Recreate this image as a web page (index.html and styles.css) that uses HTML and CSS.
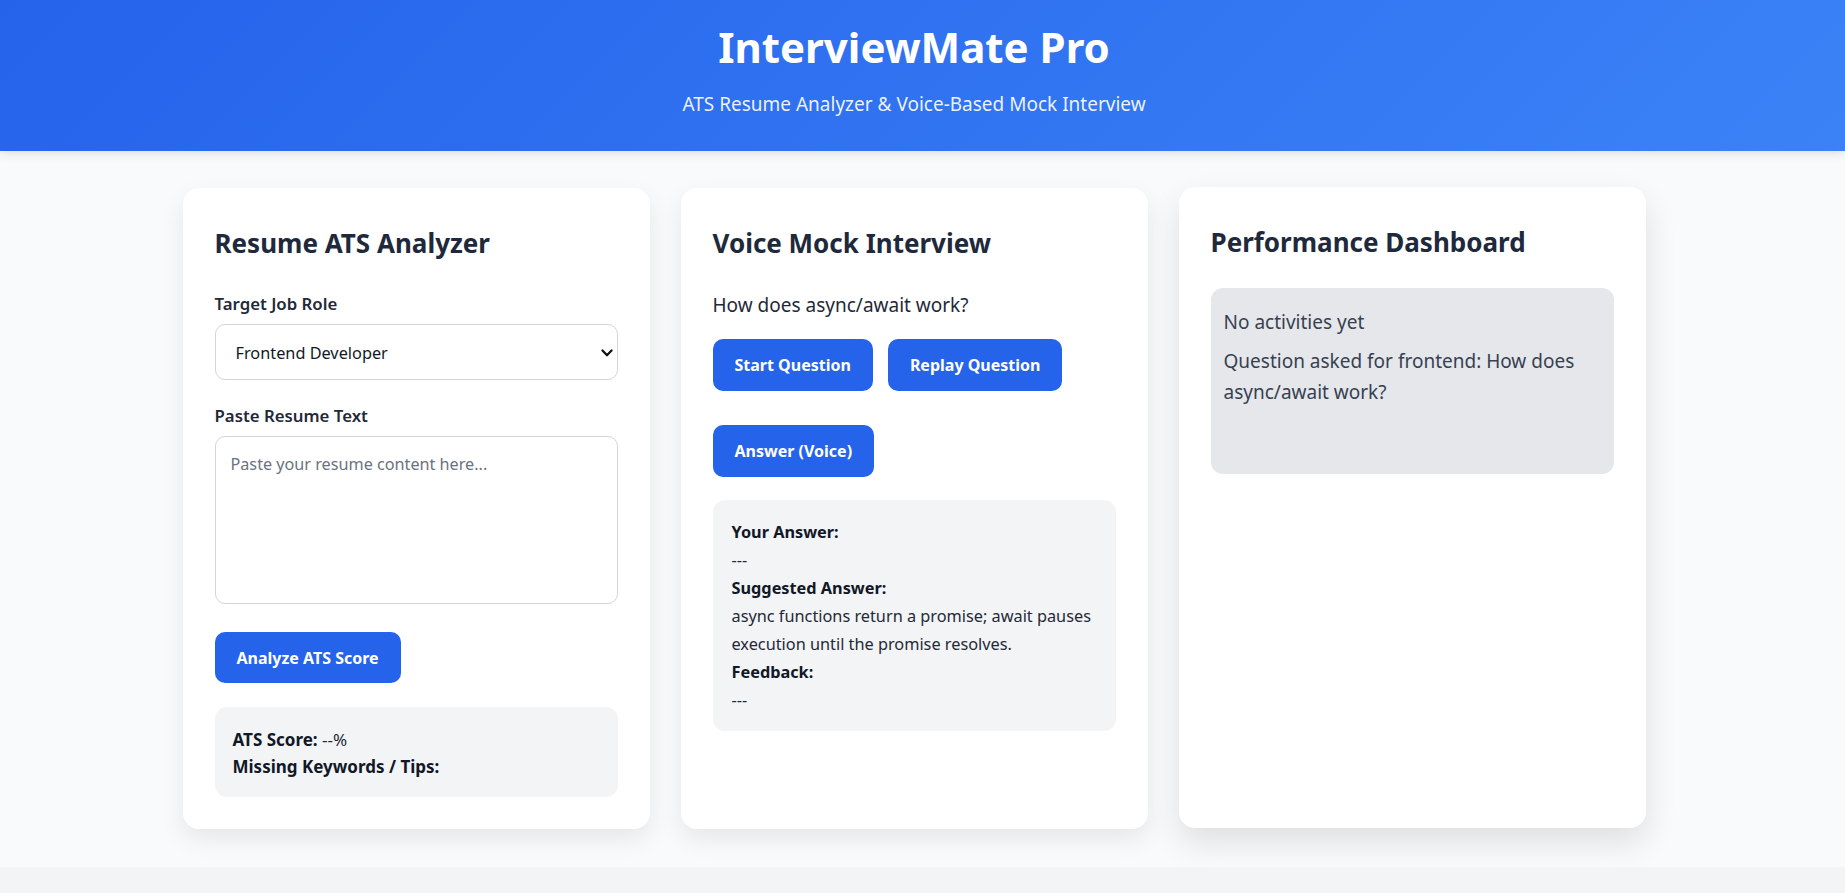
FILE: index.html
```html
<!DOCTYPE html>
<html lang="en">
<head>
<meta charset="utf-8">
<title>InterviewMate Pro</title>
<link rel="stylesheet" href="styles.css">
</head>
<body>
<header class="site-header">
  <h1 class="site-title">InterviewMate Pro</h1>
  <p class="site-subtitle">ATS Resume Analyzer &amp; Voice-Based Mock Interview</p>
</header>
<main class="main">
  <div class="grid">
    <section class="card">
      <h2 class="card-title">Resume ATS Analyzer</h2>
      <label class="field-label" for="role">Target Job Role</label>
      <div class="select-wrap">
        <select id="role" class="select">
          <option>Frontend Developer</option>
          <option>Backend Developer</option>
        </select>
        <svg class="select-arrow" width="12" height="8" viewBox="0 0 12 8"><polyline points="1.5,1.5 6,6.2 10.5,1.5" fill="none" stroke="#111" stroke-width="2.3" stroke-linecap="round" stroke-linejoin="round"/></svg>
      </div>
      <label class="field-label" for="resume">Paste Resume Text</label>
      <textarea id="resume" class="textarea" placeholder="Paste your resume content here..."></textarea>
      <div class="actions">
        <button class="btn">Analyze ATS Score</button>
      </div>
      <div class="result-box">
        <div><strong>ATS Score:</strong> <span class="result-value">--%</span></div>
        <div><strong>Missing Keywords / Tips:</strong></div>
      </div>
    </section>

    <section class="card">
      <h2 class="card-title">Voice Mock Interview</h2>
      <p class="question">How does async/await work?</p>
      <div class="btn-row">
        <button class="btn btn-tall">Start Question</button>
        <button class="btn btn-tall">Replay Question</button>
        <button class="btn btn-tall">Answer (Voice)</button>
      </div>
      <div class="answer-box">
        <div class="answer-label">Your Answer:</div>
        <div>---</div>
        <div class="answer-label">Suggested Answer:</div>
        <div>async functions return a promise; await pauses execution until the promise resolves.</div>
        <div class="answer-label">Feedback:</div>
        <div>---</div>
      </div>
    </section>

    <section class="card card-lifted">
      <h2 class="card-title">Performance Dashboard</h2>
      <div class="activity-box">
        <div class="activity-item">No activities yet</div>
        <div class="activity-item">Question asked for frontend: How does async/await work?</div>
      </div>
    </section>
  </div>
</main>
</body>
</html>
```

FILE: styles.css
```css
* { box-sizing: border-box; }

html, body {
  margin: 0;
  padding: 0;
}

body {
  background: #f3f4f6;
  font-family: "Noto Sans", "Open Sans", sans-serif;
  color: #1f2937;
  font-size: 19px;
  line-height: 28px;
}

/* content is laid out as if a 17px scrollbar took the right edge */
.site-header {
  height: 151px;
  padding: 20px 17px 0 0;
  text-align: center;
  color: #ffffff;
  background: linear-gradient(135deg, #2563eb 0%, #3b82f6 100%);
  box-shadow: 0 2px 10px rgba(0, 0, 0, 0.12);
  position: relative;
}

.site-title {
  margin: 0 0 17px;
  font-size: 42px;
  line-height: 53px;
  font-weight: 700;
}

.site-subtitle {
  margin: 0;
  font-size: 19px;
  line-height: 28px;
  color: rgba(255, 255, 255, 0.92);
}

.main {
  background: #f8fafc;
  padding: 37px 17px 38px 0;
}

.grid {
  width: 1463px;
  margin: 0 auto;
  display: grid;
  grid-template-columns: repeat(3, 1fr);
  column-gap: 31px;
}

.card {
  background: #ffffff;
  border-radius: 16px;
  padding: 32px;
  box-shadow: 0 10px 25px rgba(0, 0, 0, 0.08);
  min-height: 640px;
}

.card-lifted {
  transform: translateY(-1px);
  box-shadow: 0 14px 32px rgba(0, 0, 0, 0.11);
}

.card-title {
  margin: 0 0 23px;
  font-size: 26px;
  line-height: 46px;
  font-weight: 700;
  color: #1e293b;
}

.field-label {
  display: block;
  font-size: 16.8px;
  line-height: 30px;
  font-weight: 600;
  color: #1f2937;
  margin-bottom: 5px;
}

.select-wrap {
  position: relative;
  margin-bottom: 21px;
}

.select {
  display: block;
  width: 100%;
  height: 56px;
  padding: 2px 20px 0;
  border: 1px solid #d1d5db;
  border-radius: 10px;
  background: #ffffff;
  font-family: inherit;
  font-size: 16.3px;
  color: #111827;
  appearance: none;
  -webkit-appearance: none;
}

.select-arrow {
  position: absolute;
  right: 5px;
  top: 25px;
  pointer-events: none;
}

.textarea {
  display: block;
  width: 100%;
  height: 168px;
  padding: 15px 15px;
  border: 1px solid #d1d5db;
  border-radius: 10px;
  font-family: inherit;
  font-size: 16.2px;
  line-height: 24px;
  color: #111827;
  resize: none;
  margin-bottom: 28px;
}

.textarea::placeholder {
  color: #6b7280;
}

.actions {
  margin-bottom: 24px;
}

.btn {
  height: 51px;
  padding: 0 22px;
  border: none;
  border-radius: 10px;
  background: #2563eb;
  color: #ffffff;
  font-family: inherit;
  font-size: 16px;
  font-weight: 700;
  cursor: pointer;
}

.btn-tall {
  height: 52px;
  padding: 0 22px;
}

.result-box {
  background: #f3f4f6;
  border-radius: 12px;
  padding: 19px 18px 17px;
  font-size: 17px;
  line-height: 27px;
  color: #111827;
}

.result-box strong {
  font-weight: 700;
}

.result-value {
  color: #1f2937;
}

.question {
  margin: 0 0 17px;
  font-size: 19px;
  line-height: 33px;
  color: #1f2937;
}

.btn-row {
  display: flex;
  flex-wrap: wrap;
  column-gap: 15px;
  row-gap: 34px;
  margin-bottom: 23px;
}

.answer-box {
  background: #f3f4f6;
  border-radius: 12px;
  padding: 18px 19px 17px;
  font-size: 16.3px;
  line-height: 28px;
  color: #1f2937;
}

.answer-label {
  font-weight: 700;
  color: #111827;
}

.activity-box {
  background: #e5e7eb;
  border-radius: 12px;
  padding: 19px 13px 13px;
  min-height: 186px;
  font-size: 19px;
  line-height: 31px;
  color: #374151;
}

.activity-item {
  margin-bottom: 8px;
}
```
